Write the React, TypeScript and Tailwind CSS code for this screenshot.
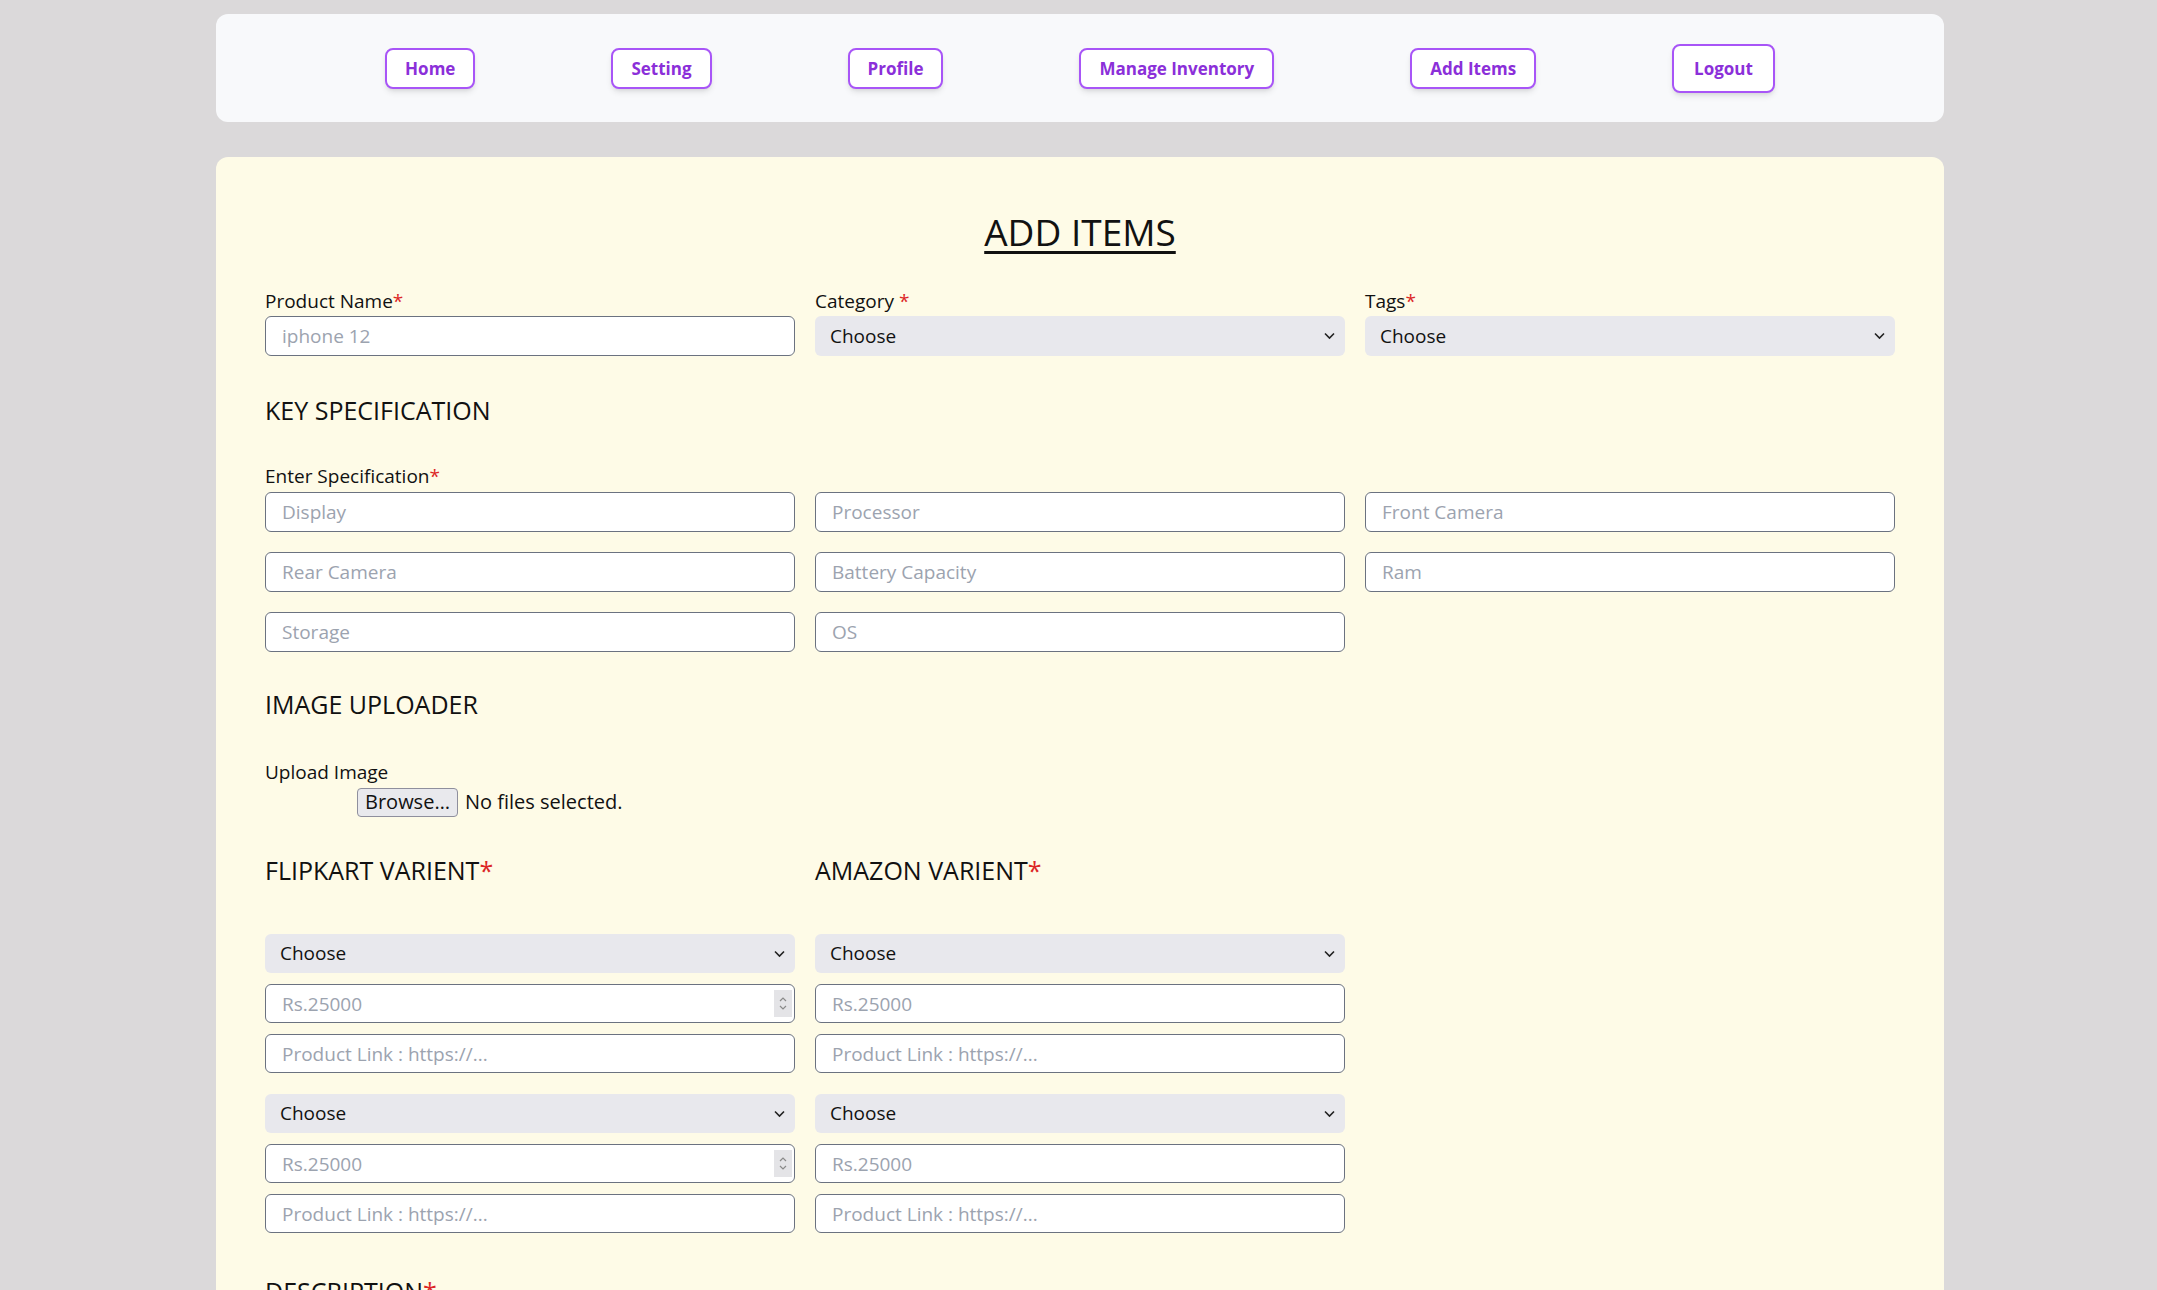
import React from 'react';

const navLinks = ['Home', 'Setting', 'Profile', 'Manage Inventory', 'Add Items'];

const specFields = ['Display', 'Processor', 'Front Camera', 'Rear Camera', 'Battery Capacity', 'Ram', 'Storage', 'OS'];

const inputCls =
  'w-full h-10 bg-white border border-[#6b7280] rounded-md px-4 text-[19px] text-[#111] placeholder:text-[#9ca3af] outline-none';

const variantInputCls =
  'w-full h-[39px] bg-white border border-[#6b7280] rounded-md px-4 text-[19px] text-[#111] placeholder:text-[#9ca3af] outline-none';

function Star() {
  return <span className="text-[#dc2626]">*</span>;
}

function Select({ small }: { small?: boolean }) {
  return (
    <div className="relative">
      <select className={`appearance-none w-full ${small ? 'h-[39px]' : 'h-10'} bg-[#e8e8ed] rounded-md pl-[15px] pr-8 text-[19px] text-[#111] outline-none`}>
        <option>Choose</option>
      </select>
      {/* chevron */}
      <svg className="absolute right-[10px] top-1/2 -translate-y-1/2 pointer-events-none" width="11" height="7" viewBox="0 0 11 7" fill="none">
        <path d="M1 1l4.5 4.5L10 1" stroke="#222" strokeWidth="1.6" />
      </svg>
    </div>
  );
}

function PriceInput({ spinner }: { spinner?: boolean }) {
  return (
    <div className="relative">
      <input type="text" placeholder="Rs.25000" className={variantInputCls} />
      {spinner && (
        <div className="absolute right-[3px] top-[6px] bottom-[6px] w-[18px] bg-[#e4e4e7] flex flex-col items-center justify-center gap-[3px] pointer-events-none">
          <svg width="8" height="5" viewBox="0 0 8 5" fill="none"><path d="M1 4l3-3 3 3" stroke="#8a8a8a" strokeWidth="1.2" /></svg>
          <svg width="8" height="5" viewBox="0 0 8 5" fill="none"><path d="M1 1l3 3 3-3" stroke="#8a8a8a" strokeWidth="1.2" /></svg>
        </div>
      )}
    </div>
  );
}

function VariantGroup({ spinner }: { spinner?: boolean }) {
  return (
    <div className="flex flex-col gap-[11px]">
      <Select small />
      <PriceInput spinner={spinner} />
      <input type="text" placeholder="Product Link : https://..." className={variantInputCls} />
    </div>
  );
}

export default function App() {
  return (
    <div className="min-h-screen bg-[#dbd9da] pt-[14px] pb-10 pl-[3px] font-['Open_Sans',sans-serif] text-[#111]">
      {/* top navigation */}
      <nav className="mx-auto w-[1728px] h-[108px] bg-[#f8f9fb] rounded-xl flex items-center justify-center gap-[136px]">
        {navLinks.map(l => (
          <button key={l} className="px-[18px] py-[7px] border-2 border-[#a855f7] rounded-lg bg-white text-[17px] leading-[23px] font-bold text-[#8b2fd9] shadow-md">
            {l}
          </button>
        ))}
        <button className="px-5 py-[11px] border-2 border-[#a855f7] rounded-lg bg-white text-[17px] leading-[23px] font-bold text-[#8b2fd9] shadow-md">
          Logout
        </button>
      </nav>

      <main className="mx-auto mt-[35px] w-[1728px] bg-[#fefbe7] rounded-xl px-[49px] pt-[52px] pb-16">
        <h1 className="text-center text-[37px] leading-[45px] underline decoration-[3px] underline-offset-[5px]">ADD ITEMS</h1>

        {/* basic info */}
        <div className="mt-[35px] grid grid-cols-3 gap-x-5">
          <div>
            <label className="block text-[19px] leading-6 mb-[3px]">Product Name<Star /></label>
            <input type="text" placeholder="iphone 12" className={inputCls} />
          </div>
          <div>
            <label className="block text-[19px] leading-6 mb-[3px]">Category <Star /></label>
            <Select />
          </div>
          <div>
            <label className="block text-[19px] leading-6 mb-[3px]">Tags<Star /></label>
            <Select />
          </div>
        </div>

        {/* key specification */}
        <h2 className="mt-[38px] text-[25px] leading-8">KEY SPECIFICATION</h2>
        <label className="block mt-[38px] text-[19px] leading-6 mb-1">Enter Specification<Star /></label>
        <div className="grid grid-cols-3 gap-5">
          {specFields.map(f => (
            <input key={f} type="text" placeholder={f} className={inputCls} />
          ))}
        </div>

        {/* image uploader */}
        <h2 className="mt-[36px] text-[25px] leading-8">IMAGE UPLOADER</h2>
        <label className="block mt-[40px] text-[19px] leading-6">Upload Image</label>
        <div className="mt-[3px] ml-[92px] flex items-center gap-[7px] text-[20px]">
          <span className="h-[29px] px-[7px] flex items-center border border-[#8f8f9d] bg-[#e9e9ed] rounded-[4px]">Browse…</span>
          <span>No files selected.</span>
        </div>

        {/* variants */}
        <div className="mt-[37px] grid grid-cols-3 gap-x-5">
          <h2 className="text-[25px] leading-8">FLIPKART VARIENT<Star /></h2>
          <h2 className="text-[25px] leading-8">AMAZON VARIENT<Star /></h2>
        </div>
        <div className="mt-[48px] grid grid-cols-3 gap-x-5">
          <div className="flex flex-col gap-[21px]">
            <VariantGroup spinner />
            <VariantGroup spinner />
          </div>
          <div className="flex flex-col gap-[21px]">
            <VariantGroup />
            <VariantGroup />
          </div>
        </div>

        {/* description */}
        <h2 className="mt-[42px] text-[25px] leading-8">DESCRIPTION<Star /></h2>
        <textarea placeholder="Write product description..." className="mt-4 w-full h-40 bg-white border border-[#6b7280] rounded-md px-4 py-2 text-[19px] placeholder:text-[#9ca3af] outline-none" />
        <div className="mt-8 flex justify-center">
          <button className="px-8 py-2 border-2 border-[#a855f7] rounded-lg bg-white text-[19px] font-bold text-[#8b2fd9] shadow-md">Submit</button>
        </div>
      </main>
    </div>
  );
}
